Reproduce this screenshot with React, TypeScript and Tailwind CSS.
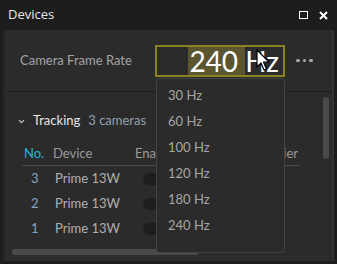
import { ChevronDown } from 'lucide-react';

const rates = ['30 Hz', '60 Hz', '100 Hz', '120 Hz', '180 Hz', '240 Hz'];
const cameras = [3, 2, 1];

export default function App() {
  return (
    <div className="relative w-[337px] h-[264px] overflow-hidden bg-[#1d1d1d] font-['Lato',sans-serif] text-[13px]">
      {/* title bar */}
      <div className="h-[30px] flex items-center justify-between pl-[8px] pr-[9px]">
        <span className="text-[13px] text-[#e8e8e8] font-['Open_Sans',sans-serif]">Devices</span>
        <div className="flex items-center gap-[11px]">
          <div className="w-[9px] h-[8px] border-[1.5px] border-white" />
          <svg width="9" height="9" viewBox="0 0 9 9">
            <path d="M1 1 L8 8 M8 1 L1 8" stroke="white" strokeWidth="2" />
          </svg>
        </div>
      </div>

      {/* body */}
      <div className="mx-[3px] h-[231px] flex flex-col bg-[#2b2b2b] border-l-2 border-r-2 border-l-[#262626] border-r-[#333333]">
        <div className="h-[62px] flex items-center border-b border-[#1f1f1f] pl-[15px]">
          <span className="w-[135px] text-[#a3a3a3]">Camera Frame Rate</span>
          <div className="w-[130px] h-[32px] border-2 border-[#8a8220] flex items-stretch justify-end pr-[4px] text-[28px] leading-none text-white">
            <span className="flex items-center bg-[#5b5630] pl-[1px]">240&nbsp;</span>
            <span className="flex items-center">Hz</span>
          </div>
          <div className="ml-[11px] flex gap-[3px]">
            <span className="w-[3.5px] h-[3.5px] rounded-full bg-[#a8a8a8]" />
            <span className="w-[3.5px] h-[3.5px] rounded-full bg-[#a8a8a8]" />
            <span className="w-[3.5px] h-[3.5px] rounded-full bg-[#a8a8a8]" />
          </div>
        </div>

        <div className="relative flex-1 flex">
          <div className="flex-1 flex flex-col pl-[12px] pr-[18px] pt-[21px]">
            <div className="flex items-center h-[16px]">
              <ChevronDown className="w-[9px] h-[9px] text-[#d0d0d0]" strokeWidth={3} />
              <span className="ml-[7px] text-[#e6e6e6]">Tracking</span>
              <span className="ml-[8px] text-[#93a0ae]">3 cameras</span>
            </div>
            <div className="mt-[14px] mx-[5px] h-[23px] flex items-center border-b border-[#4a4a4a] text-[#9a9a9a]">
              <span className="w-[31px] pl-[2px] text-[#22b4dc]">No.</span>
              <span className="w-[82px]">Device</span>
              <span className="flex-1">Enabled</span>
              <span className="pr-[2px]">Multiplier</span>
            </div>
            {cameras.map((n) => (
              <div key={n} className="mx-[5px] h-[25px] flex items-center">
                <span className="w-[33px] pl-[9px] text-[#86a2c2]">{n}</span>
                <span className="w-[88px] text-[#b0b0b0]">Prime 13W</span>
                <span className="w-[20px] h-[12px] rounded-full bg-[#1e1e1e]" />
              </div>
            ))}
            <div className="mt-[8px] ml-[-5px] w-[187px] h-[6px] rounded-full bg-[#4a4a4a]" />
          </div>
          <div className="w-[9px] pt-[5px]">
            <div className="w-[6px] h-[62px] rounded-full bg-[#4a4a4a]" />
          </div>
        </div>
      </div>

      {/* dropdown */}
      <div className="absolute left-[156px] top-[78px] w-[129px] h-[175px] bg-[#2b2b2b] border border-[#434343] rounded-[3px] pt-[4px]">
        {rates.map((r) => (
          <div key={r} className="h-[26px] flex items-center pl-[11px] text-[#a6a6a6]">
            {r}
          </div>
        ))}
      </div>

      {/* mouse pointer */}
      <svg className="absolute left-[256px] top-[49px]" width="14" height="23" viewBox="0 0 14 23">
        <path d="M1 1 L1 18 L5 14 L8 21 L10.5 20 L7.5 13 L13 13 Z" fill="white" stroke="black" strokeWidth="1.2" strokeLinejoin="round" />
      </svg>
    </div>
  );
}
